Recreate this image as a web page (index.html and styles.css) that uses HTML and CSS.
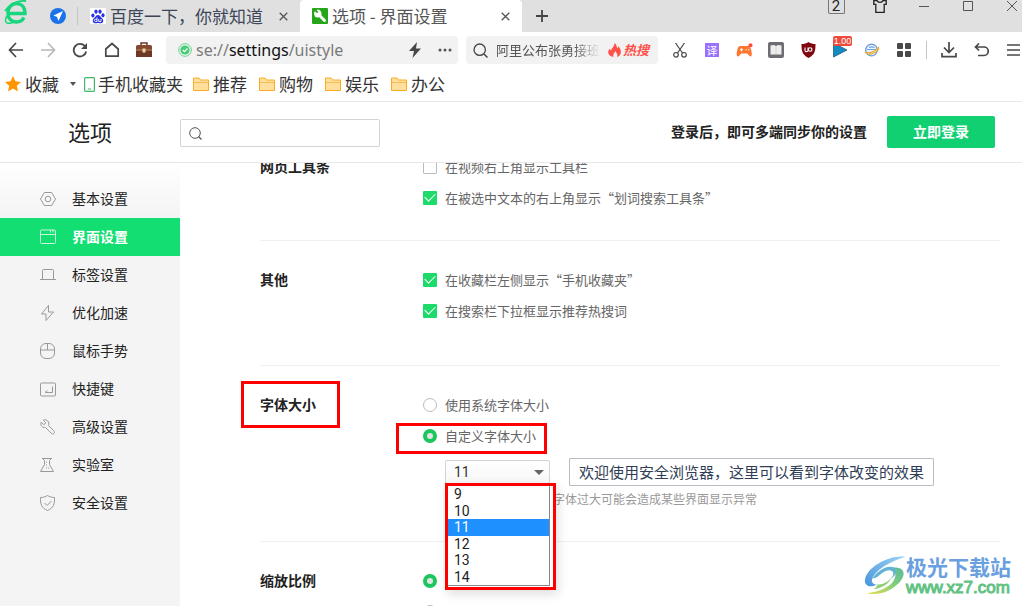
FILE: index.html
```html
<!DOCTYPE html>
<html lang="zh-CN">
<head>
<meta charset="utf-8">
<title>选项 - 界面设置</title>
<link rel="stylesheet" href="styles.css">
</head>
<body>
<header class="tabbar">
  <svg class="logo" viewBox="0 0 24 28"><g fill="none" stroke="#17d67c"><path d="M3.500 14.500H21C21 7.500 17 4.500 12.500 4.500S4 8.500 4 14s3.500 9 8.500 9c3.500 0 6-1.500 7.500-4.500" stroke-width="3.400"/><path d="M1 12C5 6 13 1 22 2" stroke-width="1.800"/><path d="M3 17c-2 3-2 6 0 7 2 .6 5 0 7-1" stroke-width="1.500"/></g></svg>
  <button class="pin" aria-label="导航"><svg viewBox="0 0 16 16"><circle cx="8" cy="8" r="8" fill="#1a73e8"/><path d="M13 3 3.500 7.500 7 9l1.500 4z" fill="#fff"/></svg></button>
  <span class="bar-line"></span>
  <div class="tab tab-first">
    <svg class="i16" viewBox="0 0 16 16"><rect width="16" height="16" rx="1" fill="#fff"/><g fill="#2932e1"><ellipse cx="2.900" cy="7.500" rx="1.600" ry="2.100"/><ellipse cx="6" cy="3.600" rx="1.600" ry="2.200"/><ellipse cx="10" cy="3.600" rx="1.600" ry="2.200"/><ellipse cx="13" cy="7.300" rx="1.600" ry="2.100"/><path d="M8 7c2 0 2.500 2 4 3.200 2 1.700 1.500 5-1 5-1.500 0-2-.3-3-.3s-1.500.3-3 .3c-2.500 0-3-3.300-1-5C5.500 9 6 7 8 7z"/></g><path d="M7 9.500v4H5.500a1 1 0 1 1 0-2.200H7M8.700 11v2.500h2.300V11" fill="none" stroke="#fff" stroke-width=".9"/></svg>
    <span class="tab-title">百度一下，你就知道</span>
    <button class="tab-close" aria-label="关闭"><svg viewBox="0 0 9 9"><path d="m.7.7 7.600 7.600M8.300.7.700 8.300" stroke="#555" stroke-width="1.300"/></svg></button>
  </div>
  <div class="tab tab-active">
    <svg class="i16" viewBox="0 0 16 16"><rect width="16" height="16" rx="1" fill="#24a618"/><path d="m6.500 6.500 6 6" stroke="#fff" stroke-width="3" stroke-linecap="round"/><path d="M3 3.200 5 5.200l1.300-1.300-1.800-2A3.800 3.800 0 1 1 2 6.500 4 4 0 0 1 3 3.200z" fill="#fff"/></svg>
    <span class="tab-title">选项 - 界面设置</span>
    <button class="tab-close" aria-label="关闭"><svg viewBox="0 0 9 9"><path d="m.7.7 7.600 7.600M8.300.7.700 8.300" stroke="#555" stroke-width="1.300"/></svg></button>
  </div>
  <button class="new-tab" aria-label="新建标签"><svg viewBox="0 0 12 12"><path d="M6 0v12M0 6h12" stroke="#444" stroke-width="1.800"/></svg></button>
  <div class="window-buttons">
    <button aria-label="窗口数"><span class="count">2</span></button>
    <button aria-label="皮肤"><svg width="14" height="14" viewBox="0 0 14 14"><path d="M4 1.500H.8v3.800h2v8h8.400v-8h2V1.500H10C9 4 5 4 4 1.500z" fill="none" stroke="#222" stroke-width="1.300"/></svg></button>
    <button aria-label="最小化"><svg width="10" height="10" viewBox="0 0 10 10"><path d="M0 5.500h10" stroke="#555"/></svg></button>
    <button aria-label="最大化"><svg width="10" height="10" viewBox="0 0 10 10"><path d="M.5.5h9v9h-9z" fill="none" stroke="#555"/></svg></button>
    <button aria-label="关闭窗口"><svg width="10" height="10" viewBox="0 0 10 10"><path d="m0 0 10 10M10 0 0 10" stroke="#555"/></svg></button>
  </div>
</header>

<nav class="toolbar">
  <div class="tool-group">
    <button aria-label="后退"><svg width="16" height="16" viewBox="0 0 16 16"><path d="M8 1 1.500 8 8 15M1.500 8H15" fill="none" stroke="#484848" stroke-width="1.700"/></svg></button>
    <button aria-label="前进"><svg width="16" height="16" viewBox="0 0 16 16"><path d="m8 1 6.500 7L8 15M14.500 8H1" fill="none" stroke="#b8b8b8" stroke-width="1.600"/></svg></button>
    <button aria-label="刷新"><svg width="16" height="16" viewBox="0 0 16 16"><path d="M14.200 9.500A6.300 6.300 0 1 1 12.800 4" fill="none" stroke="#484848" stroke-width="1.800"/><path d="M15 1v6H9z" fill="#484848"/></svg></button>
    <button aria-label="主页"><svg width="16" height="16" viewBox="0 0 16 16"><path d="M1.800 7 8 1.500 14.200 7v7.200H1.800z" fill="none" stroke="#484848" stroke-width="1.700" stroke-linejoin="round"/></svg></button>
    <button aria-label="工具箱"><svg width="18" height="18" viewBox="0 0 18 18"><path d="M6 4V2h6v2" fill="none" stroke="#6b3a28" stroke-width="1.500"/><rect x="1" y="4" width="16" height="12" rx="1.500" fill="#854832"/><path d="M1 9.300h16V16H1z" fill="#6e3826"/><path d="M1 9h16" stroke="#c0835f"/><rect x="7.500" y="7.500" width="3" height="4" fill="#eed7a0"/></svg></button>
  </div>
  <div class="address">
    <svg width="14" height="14" viewBox="0 0 14 14"><circle cx="7" cy="7" r="6.300" fill="none" stroke="#63d58c"/><circle cx="7" cy="7" r="4.600" fill="#43cd74"/><path d="m4.800 7 1.700 1.700L9.500 5.500" fill="none" stroke="#fff" stroke-width="1.200"/></svg>
    <span class="url">se://<b>settings</b>/uistyle</span>
    <button aria-label="极速模式"><svg width="12" height="16" viewBox="0 0 12 16"><path d="M8 0 0 9h5l-1.500 7L12 6.500H7z" fill="#484848"/></svg></button>
    <button aria-label="更多"><svg width="14" height="4" viewBox="0 0 14 4"><g fill="#555"><circle cx="2" cy="2" r="1.500"/><circle cx="7" cy="2" r="1.500"/><circle cx="12" cy="2" r="1.500"/></g></svg></button>
  </div>
  <div class="web-search">
    <svg width="15" height="15" viewBox="0 0 15 15"><path d="M11 11l3.500 3.500" stroke="#444" stroke-width="1.500"/><circle cx="6.700" cy="6.700" r="5.700" fill="none" stroke="#444" stroke-width="1.300"/></svg>
    <span class="trend">阿里公布张勇接班</span>
    <a class="hot" href="#"><svg width="13" height="14" viewBox="0 0 13 14"><path d="M6.500 0c3 2 1.500 4 3 5 .7-.4.800-1 .7-2C14 7 14 12.500 9 14c1-3-.5-4-2-6-.2 2-2.500 3-1.500 6C-.5 13-1 8.500 2 5.500c0 1 .3 1.500 1 2C4 4.500 6.500 3.500 6.500 0z" fill="#ff5148"/></svg>热搜</a>
  </div>
  <div class="tool-group extensions">
    <button aria-label="截图"><svg width="14" height="15" viewBox="0 0 14 15"><g fill="none" stroke="#484848" stroke-width="1.200"><path d="M2.500 0 9.500 10M11.500 0l-7 10"/><circle cx="3" cy="11.800" r="2.300"/><circle cx="11" cy="11.800" r="2.300"/></g></svg></button>
    <button aria-label="翻译"><span class="translate">译</span></button>
    <button aria-label="游戏"><svg width="17" height="15" viewBox="0 0 17 15"><path d="M4.500 3h7.500c2 0 2.600 1.500 3.200 4 .8 3.500 1 6.500-.7 6.500-1.500 0-2.200-3-3.500-3H5.500c-1.300 0-2 3-3.500 3-1.700 0-1.500-3-.7-6.500C1.900 4.500 2.500 3 4.500 3z" fill="#ff762e"/><path d="M4 6.800h3M5.500 5.300v3M9.500 6.800h1.300M12 6.800h1.300" stroke="#fff" stroke-width="1.100"/><circle cx="14.500" cy="2.200" r="2" fill="#ff4b42"/></svg></button>
    <button aria-label="阅读"><svg width="16" height="16" viewBox="0 0 16 16"><rect width="16" height="16" rx="2" fill="#6d6e73"/><path d="M2.500 3.500 6 3l2 1 2-1 3.500.5v9H2.500z" fill="#eee"/><path d="M8 4v8" stroke="#d4d4d4"/></svg></button>
    <button aria-label="广告拦截"><svg width="15" height="16" viewBox="0 0 15 16"><path d="M7.500 0C9.500 1.500 12 2 14.500 2c0 7-.5 10.500-7 14C1 12.500.5 9 .5 2 3 2 5.500 1.500 7.500 0z" fill="#800610"/><path d="M4 5.500v3c0 1.500 3 1.500 3 0v-3M7.300 7.500a1.800 1.800 0 1 0 3.600 0 1.800 1.800 0 1 0-3.600 0z" fill="none" stroke="#fff" stroke-width="1.100"/></svg></button>
    <button class="has-badge" aria-label="倍速播放"><svg width="16" height="16" viewBox="0 0 16 16"><path d="M1.500 1v14L15 8z" fill="#118bc0" stroke="#225a75" stroke-width=".8"/></svg><span class="badge">1.00</span></button>
    <button aria-label="兼容浏览"><svg width="16" height="16" viewBox="0 0 16 16"><g fill="none"><circle cx="7.500" cy="8" r="5.800" fill="#e9f2fd" stroke="#6a9bd8" stroke-width="1.300"/><path d="M3 7.500h9.500M5 5.500c2-1 3.500-1 5.500 0" stroke="#6fa5e4" stroke-width="1.200"/><path d="M.8 10.500c5 1 11-1 13.500-5 1.500 3-5 6.500-10 7" stroke="#e8ad3a" stroke-width="1.300"/></g></svg></button>
    <button aria-label="应用"><svg width="14" height="14" viewBox="0 0 14 14"><g fill="#484848"><rect width="6" height="6" rx="1"/><rect x="8" width="6" height="6" rx="1"/><rect y="8" width="6" height="6" rx="1"/><rect x="8" y="8" width="6" height="6" rx="1"/></g></svg></button>
  </div>
  <span class="bar-line"></span>
  <div class="tool-group">
    <button aria-label="下载"><svg width="16" height="16" viewBox="0 0 16 16"><path d="M8 0v10M3 5.500l5 5 5-5M1 11v3.700h14V11" fill="none" stroke="#484848" stroke-width="1.700"/></svg></button>
    <button aria-label="撤销"><svg width="15" height="14" viewBox="0 0 15 14"><path d="M1.500 4H10a4.200 4.200 0 0 1 0 8.500H4M5 .5 1.500 4 5 7.500" fill="none" stroke="#484848" stroke-width="1.700"/></svg></button>
    <button aria-label="菜单"><svg width="13" height="12" viewBox="0 0 13 12"><path d="M0 1h13M0 6h13M0 11h13" stroke="#484848" stroke-width="1.700"/></svg></button>
  </div>
</nav>

<nav class="bookmarks">
  <button class="mark favorites"><svg width="16" height="16" viewBox="0 0 16 16"><path d="m8 0 2.400 5.300 5.600.6-4.200 3.800L13 15.500l-5-3-5 3 1.200-5.800L0 5.900l5.600-.6z" fill="#ff9500"/></svg>收藏<svg class="caret" width="6" height="4" viewBox="0 0 6 4"><path d="M0 0h6L3 4z" fill="#555"/></svg></button>
  <a class="mark phone" href="#"><svg width="11" height="15" viewBox="0 0 11 15"><rect x=".6" y=".6" width="9.800" height="13.800" rx="1" fill="none" stroke="#3db86a" stroke-width="1.200"/><path d="M4 12h3" stroke="#3db86a"/></svg>手机收藏夹</a>
  <a class="mark" href="#"><svg width="16" height="14" viewBox="0 0 16 14"><path d="M.5 13V1h5.500l1.500 2h8v10.500H.5z" fill="#ffdf9b" stroke="#f8ac24"/><path d="M1 5.500h14" stroke="#f8bd52"/></svg>推荐</a>
  <a class="mark" href="#"><svg width="16" height="14" viewBox="0 0 16 14"><path d="M.5 13V1h5.500l1.500 2h8v10.500H.5z" fill="#ffdf9b" stroke="#f8ac24"/><path d="M1 5.500h14" stroke="#f8bd52"/></svg>购物</a>
  <a class="mark" href="#"><svg width="16" height="14" viewBox="0 0 16 14"><path d="M.5 13V1h5.500l1.500 2h8v10.500H.5z" fill="#ffdf9b" stroke="#f8ac24"/><path d="M1 5.500h14" stroke="#f8bd52"/></svg>娱乐</a>
  <a class="mark" href="#"><svg width="16" height="14" viewBox="0 0 16 14"><path d="M.5 13V1h5.500l1.500 2h8v10.500H.5z" fill="#ffdf9b" stroke="#f8ac24"/><path d="M1 5.500h14" stroke="#f8bd52"/></svg>办公</a>
</nav>

<div class="page-head">
  <h1>选项</h1>
  <label class="option-search">
    <svg width="13" height="13" viewBox="0 0 13 13"><path d="m9.500 9.500 3 3" stroke="#555" stroke-width="1.300"/><circle cx="6" cy="6" r="5.300" fill="none" stroke="#555"/></svg>
    <input type="search" aria-label="搜索选项">
  </label>
  <p class="login-tip">登录后，即可多端同步你的设置</p>
  <button class="login">立即登录</button>
</div>

<div class="page-body">
  <nav class="sidebar">
    <a href="#"><svg viewBox="0 0 16 16"><path d="M4.300 1.500h7.400L15.500 8l-3.800 6.500H4.300L.5 8z"/><circle cx="8" cy="8" r="2.800"/></svg>基本设置</a>
    <a href="#" class="current"><svg viewBox="0 0 16 16"><rect x=".5" y="1" width="15" height="13.500" rx="1"/><path d="M.5 5.500h15M10.500 1v2.500M13 1v2.500"/></svg>界面设置</a>
    <a href="#"><svg viewBox="0 0 16 16"><path d="M0 12.500h16M2.500 12.500v-9a1 1 0 0 1 1-1h9a1 1 0 0 1 1 1v9"/></svg>标签设置</a>
    <a href="#"><svg viewBox="0 0 16 16"><path d="M8.500.5 1.500 9H6v6.500L13.500 7h-5z"/></svg>优化加速</a>
    <a href="#"><svg viewBox="0 0 16 16"><rect x=".5" y=".5" width="14" height="15" rx="5.500"/><path d="M.5 7h14M7.500.5V7"/></svg>鼠标手势</a>
    <a href="#"><svg viewBox="0 0 16 16"><rect x=".5" y="2" width="15" height="13" rx="1"/><path d="M12.500 5.500v6h-7M7.500 9.500l-2.500 2"/></svg>快捷键</a>
    <a href="#"><svg viewBox="0 0 16 16"><path d="M3.200 1.200 5.500 3.500 5 5l-1.500.5L1.200 3.200C0 6 2 9 5.500 8.500l5.700 5.700c2 2 4.500-.5 2.500-2.500L8.500 6.500C10 3 6.500-.5 3.200 1.200z"/></svg>高级设置</a>
    <a href="#"><svg viewBox="0 0 16 16"><path d="M2 1.500h10M2.500 1.500l2 2v4l-4 7h13l-4-7v-4l2-2"/><path d="M6 5h2M6 8h2M6 11h3" stroke-dasharray="1 1"/></svg>实验室</a>
    <a href="#"><svg viewBox="0 0 16 16"><path d="M7.500.5c2 1.300 4.500 2 7 2 .3 6.500-1 10.500-7 13-6-2.500-7.300-6.500-7-13 2.500 0 5-.7 7-2z"/><path d="m4.500 8 2.500 2.500L11.500 6"/></svg>安全设置</a>
  </nav>

  <main class="settings">
    <section class="group group-short">
      <h2>网页工具条</h2>
      <div class="options">
        <label class="row"><input type="checkbox">在视频右上角显示工具栏</label>
        <label class="row"><input type="checkbox" checked>在被选中文本的右上角显示“划词搜索工具条”</label>
      </div>
    </section>
    <section class="group">
      <h2>其他</h2>
      <div class="options">
        <label class="row"><input type="checkbox" checked>在收藏栏左侧显示“手机收藏夹”</label>
        <label class="row"><input type="checkbox" checked>在搜索栏下拉框显示推荐热搜词</label>
      </div>
    </section>
    <section class="group">
      <h2 class="marked marked-title">字体大小</h2>
      <div class="options">
        <label class="row"><input type="radio" name="font">使用系统字体大小</label>
        <label class="row marked marked-option"><input type="radio" name="font" checked>自定义字体大小</label>
        <div class="font-line">
          <div class="size-picker">
            <select aria-label="字体大小"><option>9</option><option>10</option><option selected>11</option><option>12</option><option>13</option><option>14</option></select>
            <ul class="size-list" role="listbox" aria-label="字号">
              <li role="option">9</li><li role="option">10</li><li role="option" class="chosen" aria-selected="true">11</li><li role="option">12</li><li role="option">13</li><li role="option">14</li>
            </ul>
          </div>
          <p class="preview">欢迎使用安全浏览器，这里可以看到字体改变的效果</p>
        </div>
        <p class="hint">字体过大可能会造成某些界面显示异常</p>
      </div>
    </section>
    <section class="group">
      <h2>缩放比例</h2>
      <div class="options">
        <div class="row"><input type="radio" name="zoom" aria-label="默认缩放" checked></div>
        <div class="row"><input type="radio" name="zoom" aria-label="自定义缩放"></div>
      </div>
    </section>
  </main>
</div>

<div class="watermark">
  <svg width="42" height="40" viewBox="0 0 44 42"><defs><linearGradient id="blue" x1="0" y1="1" x2="1" y2="0"><stop offset="0" stop-color="#4a94dc"/><stop offset="1" stop-color="#9bd4f5"/></linearGradient><linearGradient id="green" x1="0" y1="1" x2="1" y2="0"><stop offset="0" stop-color="#e3e04f"/><stop offset=".6" stop-color="#7acb7e"/><stop offset="1" stop-color="#5ab9a0"/></linearGradient></defs><path d="M44 1C28-2 3 11 1 25c-1 6 5 9 13 5-5 0-7-3-5-7C13 14 30 4 44 1z" fill="url(#blue)"/><path d="M9 23c5 2 9-7 17-8 6 0 6 5 2 9 7-5 7-9 4-12-8-3-17 3-23 11z" fill="#63b2d6"/><path d="M32 12c12 0 12 9 4 17-9 9-22 13-33 10 12-1 24-6 28-13 3-5 2-10 1-14z" fill="url(#green)"/><path d="M14 30c6 0 12-3 15-8-2 6-9 12-20 13 3-1 5-3 5-5z" fill="#8fce72"/></svg>
  <div><strong>极光下载站</strong><span>www.xz7.com</span></div>
</div>
</body>
</html>
```
FILE: styles.css
```css
*, ::before, ::after { box-sizing: border-box; }
body {
  margin: 0;
  height: 100vh;
  overflow: hidden;
  display: flex;
  flex-direction: column;
  background: #fff;
  color: #222;
  font: 14px/20px "Noto Sans CJK SC", sans-serif;
}
h1, h2, p, ul { margin: 0; padding: 0; }
button { border: 0; padding: 0; background: none; color: inherit; font: inherit; display: flex; align-items: center; justify-content: center; flex: none; }
a { color: inherit; text-decoration: none; }
svg { display: block; flex: none; }
.i16 { width: 16px; height: 16px; }
.bar-line { width: 1px; height: 18px; background: #c4c4c4; flex: none; }

/* Tabs */
.tabbar { display: flex; align-items: center; flex: none; height: 32px; background: #e0e0e0; }
.logo { width: 24px; height: 28px; margin-left: 4px; margin-bottom: 6px; }
.pin { margin: 0 11px 0 22px; }
.pin svg { width: 16px; height: 16px; }
.tab { display: flex; align-items: center; height: 32px; gap: 4px; font-size: 17px; color: #3c4658; white-space: nowrap; }
.tab-first { width: 222px; padding-left: 12px; }
.tab-active { width: 222px; padding-left: 12px; background: #fff; border-radius: 4px 4px 0 0; color: #555; }
.tab-close { margin: 0 12px 0 auto; }
.tab-close svg { width: 9px; height: 9px; }
.new-tab { width: 40px; }
.new-tab svg { width: 12px; height: 12px; }
.window-buttons { display: flex; align-items: flex-start; margin: 0 -12px 0 auto; height: 32px; }
.window-buttons button { width: 44px; height: 12px; }
.count { width: 17px; height: 16px; border: 1px solid #777; border-top: 0; border-radius: 2px; font: 15px/16px Roboto, sans-serif; color: #222; }

/* Navigation bar */
.toolbar { display: flex; align-items: center; flex: none; height: 36px; margin-right: -7px; }
.tool-group { display: flex; flex: none; }
.tool-group button { width: 32px; height: 28px; }
.address, .web-search { display: flex; align-items: center; height: 28px; background: #f2f2f2; border-radius: 4px; }
.address { flex: 1; margin: 0 8px 0 6px; padding: 0 0 0 12px; gap: 4px; }
.url { flex: 1; font: 16px/24px "Noto Sans", sans-serif; color: #7b7b7b; white-space: nowrap; }
.url b { font-weight: 400; color: #111; }
.address button { width: 26px; }
.web-search { width: 192px; padding: 0 9px 0 7px; gap: 8px; }
.trend { flex: 1; overflow: hidden; white-space: nowrap; font-size: 13px; color: #555; -webkit-mask-image: linear-gradient(90deg, #000 75%, transparent); mask-image: linear-gradient(90deg, #000 75%, transparent); }
.hot { display: flex; align-items: center; gap: 2px; font-size: 13px; font-weight: 700; font-style: italic; color: #ff5148; }
.extensions { margin: 0 6px; }
.translate { width: 14px; height: 14px; background: #9a70ff; color: #fff; font-size: 11px; line-height: 14px; }
.has-badge { position: relative; }
.badge { position: absolute; top: 0; left: 9px; width: 19px; height: 10px; border-radius: 2px; background: #ef4b3c; color: #fff; font: 9px/10px "Liberation Sans", sans-serif; }
.toolbar .bar-line { margin-right: 6px; }

/* Bookmarks */
.bookmarks { display: flex; align-items: center; flex: none; height: 34px; padding: 0 0 1px 5px; gap: 12px; border-bottom: 1px solid #e8e8e8; font-size: 17px; color: #333; }
.mark { display: flex; align-items: center; gap: 4px; white-space: nowrap; }
.favorites { margin-right: -4px; }
.caret { margin-left: 7px; }
.phone { gap: 3px; margin-right: -2px; }

/* Page heading */
.page-head { display: flex; align-items: center; flex: none; height: 61px; padding-right: 27px; border-bottom: 1px solid #e8e8e8; }
h1 { width: 180px; padding: 0 0 2px 68px; font-size: 22px; font-weight: 400; line-height: 32px; }
.option-search { display: flex; align-items: center; gap: 8px; width: 200px; height: 28px; margin-top: 2px; padding: 0 8px; border: 1px solid #d4d4d4; border-radius: 2px; }
.option-search input { width: 100%; border: 0; outline: 0; background: none; font: inherit; }
.login-tip { margin-left: auto; padding-bottom: 2px; font-weight: 700; }
.login { width: 108px; height: 32px; margin-left: 20px; padding-bottom: 2px; border-radius: 2px; background: #11d072; color: #fff; font-weight: 700; }

/* Sidebar */
.page-body { display: flex; flex: 1; min-height: 0; }
.sidebar { width: 180px; flex: none; padding-top: 17px; background: linear-gradient(#fff, #f4f4f4 54px); }
.sidebar a { display: flex; align-items: center; height: 38px; padding: 0 0 2px 40px; gap: 16px; }
.sidebar svg { width: 16px; height: 16px; margin-top: 2px; fill: none; stroke: #999; }
.sidebar .current { background: #13de72; color: #fff; font-weight: 700; }
.sidebar .current svg { stroke: #c5f8dc; }

/* Settings */
.settings { flex: 1; min-width: 0; overflow: hidden; padding: 0 22px 0 80px; }
.group { display: flex; padding: 23px 0 39px; border-bottom: 1px solid #f0f0f0; }
.group-short { margin-top: -35px; padding-bottom: 27px; }
h2 { width: 163px; flex: none; font-size: 14px; line-height: 31px; font-weight: 700; }
.options { flex: 1; min-width: 0; font-size: 13px; color: #666; }
.row { display: flex; align-items: center; gap: 8px; height: 31px; width: fit-content; }
.row input { appearance: none; flex: none; width: 14px; height: 14px; margin: 0; border: 1px solid #bbb; background: #fff; }
.row input[type="checkbox"] { border-radius: 1px; }
.row input[type="radio"] { border-radius: 50%; }
.row input[type="checkbox"]:checked { display: grid; place-items: center; border: 0; background: #1cdb6b; }
.row input[type="checkbox"]:checked::after { content: ""; width: 10px; height: 6px; margin-bottom: 3px; border: solid #fff; border-width: 0 0 1px 1px; transform: rotate(-45deg); }
.row input[type="radio"]:checked { border: 4px solid #1bc65c; background: #e4e4e4; }
.font-line { display: flex; gap: 19px; margin: 7px 0 0 22px; }
.size-picker { position: relative; width: 105px; padding-top: 2px; }
select { appearance: none; width: 100%; height: 24px; padding: 0 8px; border: 1px solid #d4d4d4; border-radius: 2px; background: linear-gradient(#fff, #f7f7f7); color: #333; font: 14px/20px Roboto, sans-serif; }
.size-picker::after { content: ""; position: absolute; top: 12px; right: 6px; border: solid transparent; border-width: 5px 5px 0; border-top-color: #666; }
.size-list { position: absolute; z-index: 2; top: 25px; left: 0; display: grid; grid-template-rows: repeat(6, 1fr); width: 111px; height: 107px; padding: 0 3px 1px 0; border: 3px solid #f00; background: #fff; list-style: none; color: #222; font: 14px/16px Roboto, sans-serif; box-shadow: 2px 4px 10px #0002; }
.size-list li { padding-left: 6px; border-right: 1px solid #888; }
.size-list li:last-child { border-bottom: 1px solid #888; }
.size-list .chosen { background: #1e90ff; color: #fff; }
.preview { height: 28px; padding: 0 9px; border: 1px solid #b9bcc4; border-radius: 1px; color: #2f3d55; font-size: 15px; line-height: 26px; white-space: nowrap; }
.hint { margin: 3px 0 -7px 130px; font-size: 12px; color: #999; }

/* Highlight frames */
.marked { position: relative; }
.marked::before { content: ""; position: absolute; border: 3px solid #f00; }
.marked-title::before { left: -19px; top: -8px; width: 99px; height: 47px; }
.marked-option::before { left: -27px; top: 3px; width: 151px; height: 31px; }

/* Site mark over the page */
.watermark { position: absolute; right: 11px; bottom: 8px; display: flex; align-items: center; }
.watermark strong { display: block; font-size: 21px; line-height: 24px; color: #6a9fe0; }
.watermark span { display: block; font: 17px/20px "Liberation Sans", sans-serif; color: #62c284; -webkit-text-stroke: 1px #62c284; }
```
